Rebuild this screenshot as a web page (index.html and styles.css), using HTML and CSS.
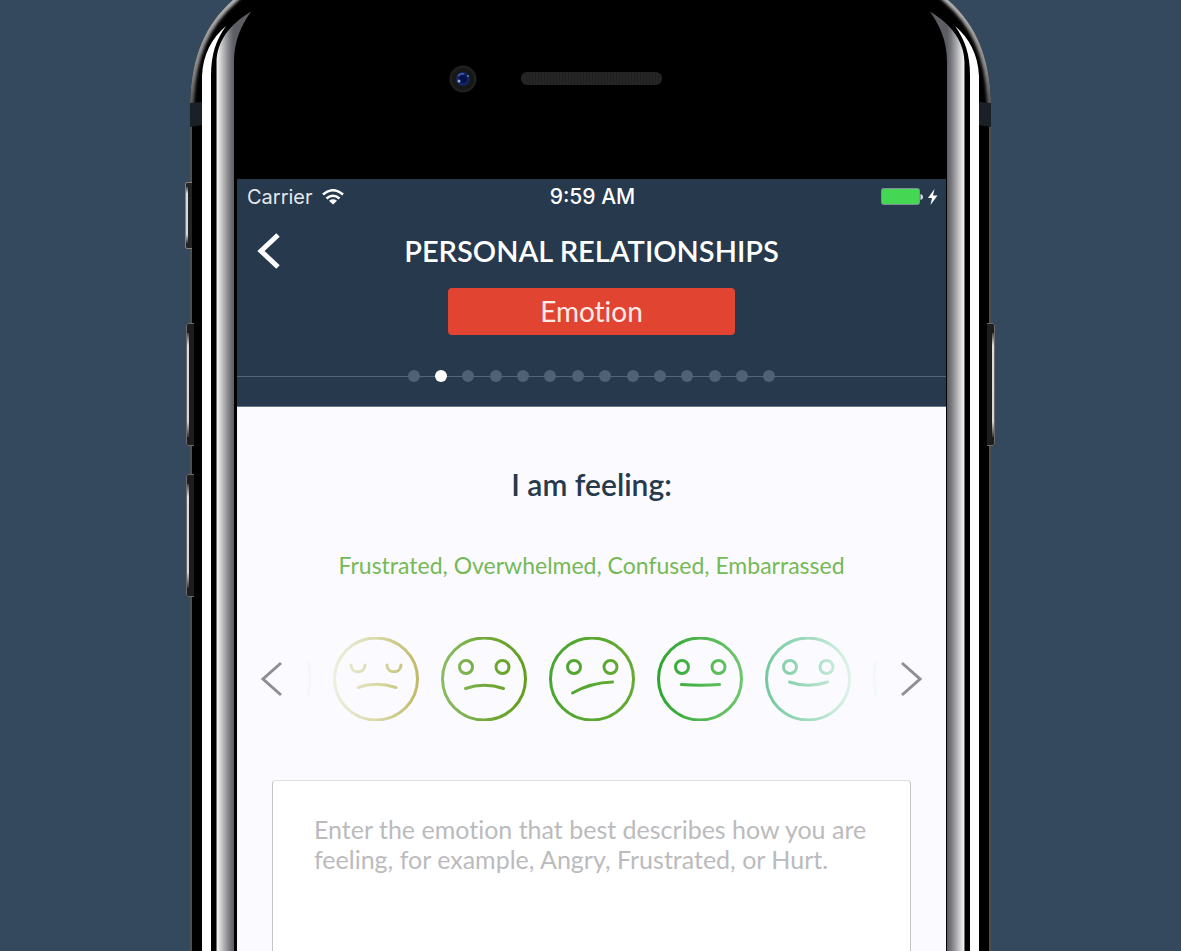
FILE: index.html
```html
<!DOCTYPE html>
<html lang="en">
<head>
<meta charset="utf-8">
<meta name="viewport" content="width=device-width, initial-scale=1">
<title>Personal Relationships</title>
<link rel="stylesheet" href="styles.css">
</head>
<body>
<svg width="0" height="0" class="defs" aria-hidden="true">
  <defs>
    <linearGradient id="silver" gradientUnits="userSpaceOnUse" x1="31" y1="0" x2="49" y2="0">
      <stop offset="0" stop-color="#cfcfd1"/><stop offset=".08" stop-color="#f0f0f1"/><stop offset=".2" stop-color="#dcdcde"/><stop offset=".5" stop-color="#a6a6aa"/><stop offset=".8" stop-color="#737479"/><stop offset="1" stop-color="#5c5e63"/>
    </linearGradient>
    <linearGradient id="edge" gradientUnits="userSpaceOnUse" x1="0" y1="0" x2="0" y2="110">
      <stop offset="0" stop-color="#b4b4b4"/><stop offset=".6" stop-color="#8d8d8d"/><stop offset="1" stop-color="#4d5052"/>
    </linearGradient>
    <linearGradient id="key" x1="0" y1="0" x2="0" y2="1">
      <stop offset="0" stop-color="#444"/><stop offset=".12" stop-color="#ddd"/><stop offset=".85" stop-color="#d5d5d5"/><stop offset="1" stop-color="#333"/>
    </linearGradient>
    <filter id="soft" x="-20%" y="-20%" width="140%" height="140%"><feGaussianBlur stdDeviation="1.6"/></filter>
    <clipPath id="body-clip"><path d="M5 4000V100C7 56 20 24 49 -1H80V4000Z"/></clipPath>
    <symbol id="rail" overflow="visible">
      <path d="M5 4000V100C7 56 20 24 49 -1H53V4000Z" fill="#000"/>
      <g clip-path="url(#body-clip)">
        <path d="M5 110V100C7 56 20 24 49 -1L54 -6" fill="none" stroke="url(#edge)" stroke-width="8" filter="url(#soft)"/>
      </g>
      <path d="M6 126V4000" stroke="#4d4f50" stroke-width="2"/>
      <path d="M5 103L17 102V125L5 127Z" fill="#1b2027"/>
      <path d="M17 4000V76C18 54 27 38 41 26C31 40 26 54 26 76V4000Z" fill="#fff"/>
      <path d="M31.500 4000V62C32 41 45 24 66 11.500C56 26 49 41 49 62V4000Z" fill="url(#silver)"/>
    </symbol>
    <symbol id="long-key" overflow="visible">
      <rect x="0" y="0" width="8" height="123" rx="2" fill="#1d1d1e"/>
      <path d="M8 .5H2Q.5 .5 .5 3V120Q.5 122.500 2 122.500H8" fill="none" stroke="#6d6a68"/>
      <rect x="1" y="10" width="2" height="104" fill="url(#key)"/>
    </symbol>
    <linearGradient id="f1" gradientUnits="userSpaceOnUse" x1="0" y1="0" x2="86" y2="0"><stop offset="0" stop-color="#eeefe0"/><stop offset=".5" stop-color="#d9d9a8"/><stop offset="1" stop-color="#bdbb67"/></linearGradient>
    <linearGradient id="f2" gradientUnits="userSpaceOnUse" x1="0" y1="0" x2="86" y2="0"><stop offset="0" stop-color="#8abd64"/><stop offset=".5" stop-color="#73a93c"/><stop offset="1" stop-color="#639e1c"/></linearGradient>
    <linearGradient id="f3" gradientUnits="userSpaceOnUse" x1="0" y1="0" x2="86" y2="0"><stop offset="0" stop-color="#4aa52f"/><stop offset="1" stop-color="#67aa32"/></linearGradient>
    <linearGradient id="f4" gradientUnits="userSpaceOnUse" x1="0" y1="0" x2="86" y2="0"><stop offset="0" stop-color="#2da52e"/><stop offset="1" stop-color="#70c76e"/></linearGradient>
    <linearGradient id="f5" gradientUnits="userSpaceOnUse" x1="0" y1="0" x2="86" y2="0"><stop offset="0" stop-color="#72c99e"/><stop offset=".5" stop-color="#a0dabe"/><stop offset="1" stop-color="#dff3ea"/></linearGradient>
  </defs>
</svg>

<div class="phone">
  <svg class="rail rail-left" aria-hidden="true">
    <use href="#rail"/>
    <rect x="1" y="182" width="6" height="67" rx="2" fill="#242424"/>
    <path d="M7 182.500H2Q.5 182.500 .5 184V247Q.5 248.500 2 248.500H7" fill="none" stroke="#8b8178"/>
    <rect x="1" y="187" width="2" height="56" fill="url(#key)"/>
    <use href="#long-key" x="1" y="323"/>
    <use href="#long-key" x="1" y="474"/>
  </svg>
  <svg class="rail rail-right" aria-hidden="true">
    <use href="#rail"/>
    <use href="#long-key" x="1" y="323"/>
  </svg>

  <div class="bezel" aria-hidden="true">
    <svg class="camera" width="28" height="28" viewBox="0 0 28 28">
      <circle cx="14" cy="14" r="13.500" fill="#202021"/><circle cx="14" cy="14" r="11" fill="#171718"/>
      <circle cx="14" cy="14" r="7" fill="#14245e"/><circle cx="14" cy="14" r="4" fill="#07114a"/>
      <path d="M9 11Q11 8 15 9" stroke="#3855a5" stroke-width="2" fill="none"/>
      <circle cx="10" cy="16" r="1.500" fill="#8eb3d0"/><circle cx="19" cy="11" r="1" fill="#3b93b5"/>
    </svg>
    <div class="speaker"></div>
  </div>

  <div class="screen">
    <header class="header">
      <div class="status">
        <span class="carrier">Carrier
          <svg width="22" height="16" viewBox="0 0 22 16" fill="none" stroke="#fff" stroke-width="2.600" aria-hidden="true">
            <path d="M1 5.500Q11 -3 21 5.500"/><path d="M4.500 9.500Q11 4 17.500 9.500"/><path d="M11 15.500L7 11.700Q11 8.800 15 11.700Z" fill="#fff" stroke="none"/>
          </svg>
        </span>
        <span class="time">9:59 AM</span>
        <svg class="battery" width="58" height="18" viewBox="0 0 58 18" aria-label="Battery charging">
          <rect x="1.500" y=".5" width="38" height="16" rx="2" fill="#45d654" stroke="#7f8f96"/>
          <path d="M40.500 6Q43 6.500 43 9T40.500 12Z" fill="#dfe3e6"/>
          <path d="M54.500 1L48 10H52L50.500 17L57.500 7.500H53Z" fill="#fff"/>
        </svg>
      </div>
      <div class="titlebar">
        <button class="back" type="button" aria-label="Back">
          <svg width="24" height="36" viewBox="0 0 24 36" fill="none" stroke="#fff" stroke-width="5"><path d="M21 2L4 18L21 34"/></svg>
        </button>
        <h1>PERSONAL RELATIONSHIPS</h1>
      </div>
      <p class="step-name">Emotion</p>
      <div class="progress">
        <ol class="steps" aria-label="Step 2 of 14">
          <li></li><li class="current"></li><li></li><li></li><li></li><li></li><li></li><li></li><li></li><li></li><li></li><li></li><li></li><li></li>
        </ol>
      </div>
    </header>

    <main class="content">
      <h2>I am feeling:</h2>
      <p class="feelings">Frustrated, Overwhelmed, Confused, Embarrassed</p>
      <div class="picker">
        <button class="arrow" type="button" aria-label="Previous">
          <svg width="22" height="36" viewBox="0 0 22 36"><path d="M20 2L2 18L20 34"/></svg>
        </button>
        <div class="faces">
          <svg class="peek" width="4" height="34" viewBox="0 0 4 34" aria-hidden="true"><path d="M1 0Q5 17 1 34" stroke="#f6f6f7"/></svg>
          <button type="button" aria-label="Sad">
            <svg viewBox="0 0 86 84" stroke="url(#f1)"><ellipse cx="43" cy="42" rx="41.500" ry="41"/><path d="M18 28C18 37 32 37 32 28M54 28C54 37 68 37 68 28M25 50.500Q43 44 63 50.500"/></svg>
          </button>
          <button type="button" aria-label="Frustrated">
            <svg viewBox="0 0 86 84" stroke="url(#f2)"><ellipse cx="43" cy="42" rx="41.500" ry="41"/><circle cx="25" cy="30" r="6.500"/><circle cx="61.500" cy="30" r="6.500"/><path d="M24.500 51.500Q43 45 62.500 51.500"/></svg>
          </button>
          <button type="button" aria-label="Confused">
            <svg viewBox="0 0 86 84" stroke="url(#f3)"><ellipse cx="43" cy="42" rx="41.500" ry="41"/><circle cx="25" cy="30" r="6.500"/><circle cx="61.500" cy="30" r="6.500"/><path d="M23.500 56Q42 45.500 63.500 45"/></svg>
          </button>
          <button type="button" aria-label="Neutral">
            <svg viewBox="0 0 86 84" stroke="url(#f4)"><ellipse cx="43" cy="42" rx="41.500" ry="41"/><circle cx="25" cy="30" r="6.500"/><circle cx="61.500" cy="30" r="6.500"/><path d="M24.500 47.500Q43 49 62.500 47.500"/></svg>
          </button>
          <button type="button" aria-label="Content">
            <svg viewBox="0 0 86 84" stroke="url(#f5)"><ellipse cx="43" cy="42" rx="41.500" ry="41"/><circle cx="25" cy="30" r="6.500"/><circle cx="61.500" cy="30" r="6.500"/><path d="M24.500 45Q43 51.500 62.500 45"/></svg>
          </button>
          <svg class="peek" width="4" height="34" viewBox="0 0 4 34" aria-hidden="true"><path d="M3 0Q-1 17 3 34" stroke="#f2f7f9"/></svg>
        </div>
        <button class="arrow" type="button" aria-label="Next">
          <svg width="22" height="36" viewBox="0 0 22 36"><path d="M2 2L20 18L2 34"/></svg>
        </button>
      </div>
      <textarea class="entry" aria-label="Emotion" placeholder="Enter the emotion that best describes how you are feeling, for example, Angry, Frustrated, or Hurt."></textarea>
    </main>
  </div>
</div>
</body>
</html>
```

FILE: styles.css
```css
* { box-sizing: border-box; }

body {
  margin: 0;
  background: #34495e;
  font-family: Lato, "Open Sans", sans-serif;
  font-variant-ligatures: none;
  color: #27394d;
}

h1, h2, p, ol { margin: 0; padding: 0; }

button {
  border: 0;
  padding: 0;
  background: none;
  cursor: pointer;
}

svg { display: block; }
.defs { position: absolute; }

.phone {
  position: relative;
  display: flex;
  flex-direction: column;
  width: min(100%, 811px);
  min-height: 100vh;
  margin: 0 auto;
  padding: 0 50px 0 52px;
  background: #000;
  background-clip: content-box;
}

.rail {
  position: absolute;
  top: 0;
  width: 110px;
  height: 100%;
  pointer-events: none;
}
.rail-left { left: 0; }
.rail-right { right: 0; transform: scaleX(-1); }

.bezel {
  display: flex;
  align-items: center;
  justify-content: center;
  gap: 44px;
  height: 179px;
  padding: 0 72px 22px 0;
}
.camera { flex: none; }
.speaker {
  flex: none;
  width: 141px;
  height: 13px;
  border-radius: 6px;
  background: repeating-linear-gradient(90deg, #262626 0 2px, #1f1f1f 2px 3px);
}

.screen {
  position: relative;
  display: flex;
  flex: 1;
  flex-direction: column;
  background: #fbfaff;
}

.header {
  display: flex;
  flex-direction: column;
  align-items: center;
  padding-bottom: 24px;
  background: #27394d;
  border-bottom: 1px solid #69788a;
  color: #fff;
}

.status {
  display: grid;
  grid-template-columns: 1fr auto 1fr;
  align-items: center;
  width: 100%;
  height: 36px;
  padding: 0 8px 0 10px;
  font: 400 20px/24px Inter, sans-serif;
}
.carrier { display: flex; align-items: center; gap: 9px; color: #e4e8ec; }
.time { font-size: 21px; font-weight: 500; }
.battery { justify-self: end; }

.titlebar {
  display: grid;
  grid-template-columns: 64px 1fr 64px;
  align-items: center;
  width: 100%;
  height: 71px;
  margin-bottom: 2px;
}
.back { justify-self: center; }
h1 {
  font-size: 29px;
  font-weight: 600;
  line-height: 36px;
  text-align: center;
}

.step-name {
  width: 287px;
  border-radius: 4px;
  background: #e24432;
  color: #ffeae7;
  font-size: 28px;
  line-height: 47px;
  text-align: center;
}

.progress {
  display: flex;
  align-items: center;
  width: 100%;
  margin-top: 35px;
}
.progress::before,
.progress::after {
  content: "";
  flex: 1;
  height: 1px;
  background: #53667a;
}
.steps {
  display: flex;
  justify-content: space-between;
  width: 368px;
  background: linear-gradient(#53667a, #53667a) center / 100% 1px no-repeat;
  list-style: none;
}
.steps li {
  width: 12px;
  height: 12px;
  border-radius: 50%;
  background: #4f6177;
}
.steps .current { background: #fff; }

.content {
  display: flex;
  flex: 1;
  flex-direction: column;
  padding: 59px 35px 0;
  text-align: center;
}
h2 {
  font-size: 30px;
  font-weight: 600;
  line-height: 36px;
}
.feelings {
  margin-top: 48px;
  color: #75b956;
  font-size: 23px;
  line-height: 30px;
}

.picker {
  display: flex;
  align-items: center;
  justify-content: space-between;
  margin: 57px -11px 0;
}
.arrow svg { fill: none; stroke: #8e8e93; stroke-width: 3; }
.faces {
  display: flex;
  align-items: center;
  gap: 22px;
}
.faces svg { fill: none; stroke-width: 3; stroke-linecap: round; }
.faces button svg { width: 86px; height: 84px; }

.entry {
  display: block;
  flex: 1;
  width: 100%;
  min-height: 171px;
  margin-top: 59px;
  padding: 33px 41px;
  border: 1px solid #c4c4c8;
  border-top-color: #dedee3;
  border-bottom: 0;
  border-radius: 4px 4px 0 0;
  outline: 0;
  resize: none;
  background: #fff;
  color: #27394d;
  font-family: inherit;
  font-size: 25px;
  line-height: 30px;
  font-variant-ligatures: none;
}
.entry::placeholder { color: #bbbbbd; opacity: 1; }
```
